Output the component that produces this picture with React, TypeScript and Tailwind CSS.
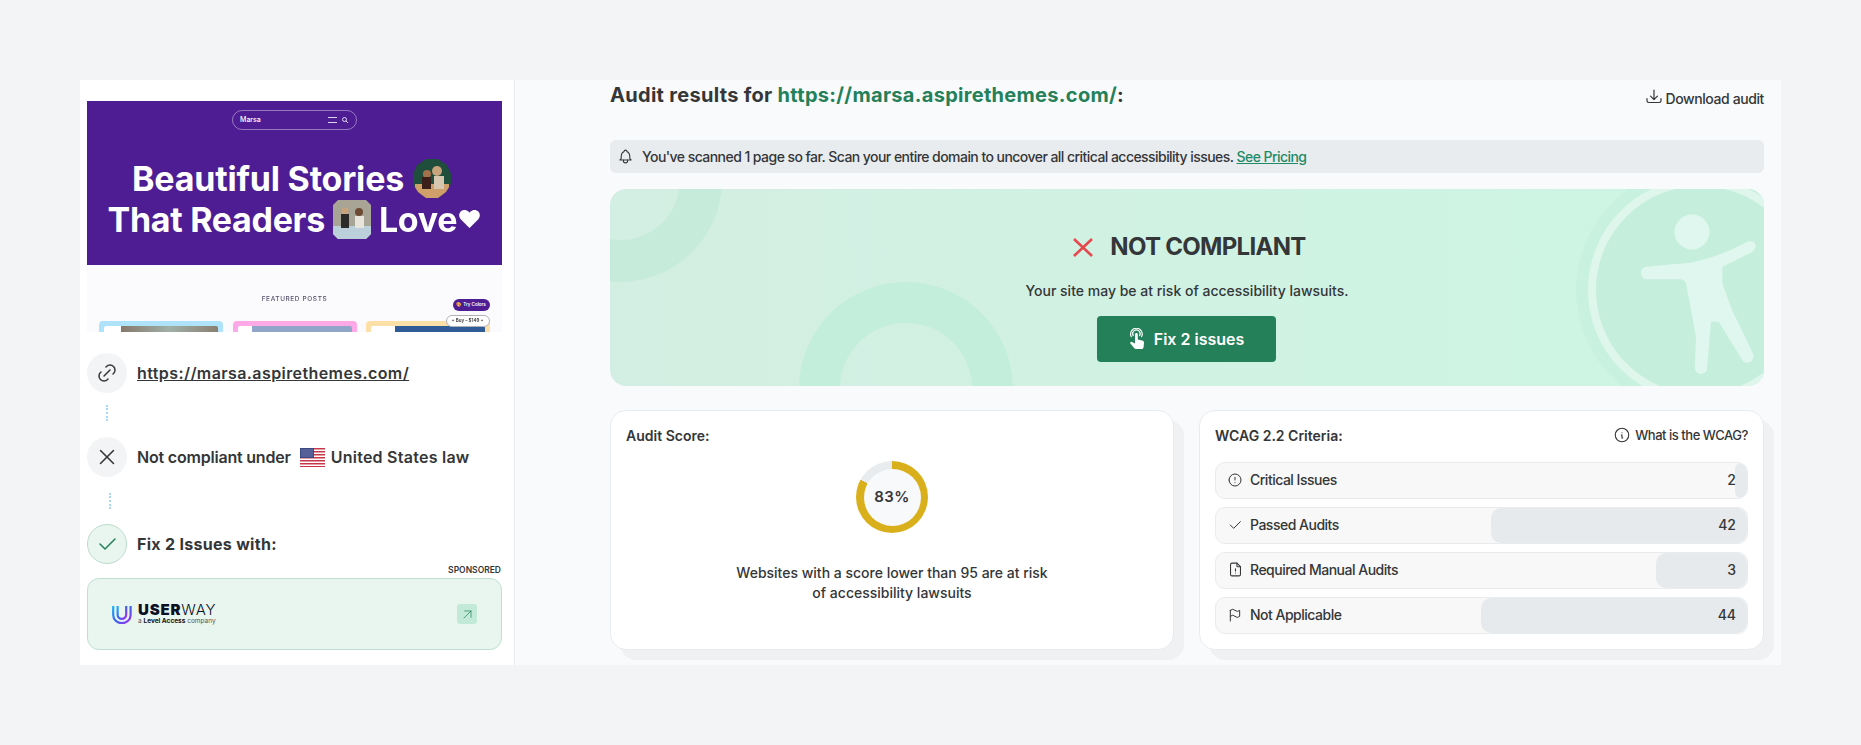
import React from "react";
import { TbLink, TbX, TbCheck, TbBell, TbInfoCircle, TbAlertCircle, TbFileAlert, TbFlag, TbArrowUpRight } from "react-icons/tb";

function HandIcon() {
  return (
    <svg width="18" height="22" viewBox="0 0 18 22" fill="none" className="shrink-0">
      <path d="M3.2 8.6a5.8 5.8 0 1 1 10.4 0" stroke="#fff" strokeWidth="1.2" strokeLinecap="round" />
      <path d="M5.2 7.6a3.7 3.7 0 1 1 6.4 0" stroke="#fff" strokeWidth="1.2" strokeLinecap="round" />
      <path d="M7 6.4a1.4 1.4 0 0 1 2.8 0v5.2l4.4 1a2.2 2.2 0 0 1 1.8 2.3l-.5 4.6a2 2 0 0 1-2 1.5H8a2.2 2.2 0 0 1-1.7-.8L2.4 15.6c-.8-1 .4-2.4 1.6-1.7L7 15.6z" fill="#fff" />
    </svg>
  );
}

function DownloadIcon() {
  return (
    <svg width="16" height="15" viewBox="0 0 16 15" fill="none" stroke="#343638" strokeWidth="1.2" strokeLinecap="round" strokeLinejoin="round" className="-mt-[6px] shrink-0">
      <path d="M8 1v9.4M4.6 7.2 8 10.6l3.4-3.4" />
      <path d="M1 9.6v2.2c0 1 .8 1.7 1.7 1.7h10.6c.9 0 1.7-.7 1.7-1.7V9.6" />
    </svg>
  );
}

function CrossIcon() {
  return (
    <svg width="20" height="19" viewBox="0 0 20 19" fill="none" stroke="#e5484d" strokeWidth="2.6" className="shrink-0">
      <path d="M1 1l18 17M19 1 1 18" />
    </svg>
  );
}

function FlagUS() {
  return (
    <svg width="25" height="19" viewBox="0 0 25 19" className="shrink-0">
      <rect width="25" height="19" fill="#fff" />
      {[0, 3, 6, 9, 12, 15, 18].map((y) => (
        <rect key={y} y={y} width="25" height="1.5" fill="#c8384a" />
      ))}
      <rect width="14" height="10" fill="#3c4a86" />
      <rect x="1" y="1" width="12" height="8" fill="#6670a3" opacity="0.6" />
    </svg>
  );
}

function Thumb({ bg, clip, points, children }: { bg: string; clip: string; points: string; children?: React.ReactNode }) {
  return (
    <svg width="38" height="39" viewBox="0 0 38 39" className="inline-block shrink-0">
      <defs>
        <clipPath id={clip}>
          <polygon points={points} />
        </clipPath>
      </defs>
      <g clipPath={`url(#${clip})`}>
        <rect width="38" height="39" fill={bg} />
        {children}
      </g>
    </svg>
  );
}

function Preview() {
  return (
    <div className="relative h-[231px] shrink-0 overflow-hidden bg-[#fbfbfe]">
      <div className="blur-[0.3px]">
        <div className="flex h-[164px] flex-col items-center bg-[#4e1d93] pt-[9px] text-white">
          <div className="flex h-[20px] w-[125px] items-center justify-between rounded-full border border-white/40 pl-[7px] pr-[8px]">
            <span className="text-[7px] font-medium">Marsa</span>
            <span className="flex items-center gap-[5px]">
              <span className="flex h-[6px] w-[9px] flex-col justify-between">
                <span className="h-px bg-white/80" />
                <span className="h-px bg-white/80" />
              </span>
              <svg width="6" height="6" viewBox="0 0 6 6" fill="none" stroke="#fff" strokeWidth="0.8">
                <circle cx="2.5" cy="2.5" r="2" />
                <path d="m4 4 2 2" />
              </svg>
            </span>
          </div>
          <div className="mt-[28px] flex h-[41px] items-center gap-[9px] pr-[6px] text-[34px] font-bold tracking-[-0.2px]">
            <span>Beautiful Stories</span>
            <Thumb bg="#1f4f3c" clip="thumb-a" points="13,0 25,0 34,6 38,15 38,25 33,33 25,39 13,39 5,33 0,25 0,15 4,6">
              <rect x="2" y="25" width="34" height="14" fill="#d0a06a" />
              <circle cx="24" cy="12" r="5" fill="#c9a37c" />
              <circle cx="14" cy="15" r="4" fill="#a5714c" />
              <rect x="9" y="18" width="9" height="12" fill="#3a1f1a" />
              <rect x="21" y="17" width="10" height="13" fill="#d8c7b0" />
            </Thumb>
          </div>
          <div className="flex h-[41px] items-center gap-[8px] text-[34px] font-bold tracking-[-0.3px]">
            <span>That Readers</span>
            <Thumb bg="#a9a596" clip="thumb-b" points="5,0 33,0 38,5 38,34 33,39 5,39 0,34 0,5">
              <rect y="26" width="38" height="13" fill="#bcd0dc" />
              <circle cx="12" cy="11" r="3.5" fill="#c9a37c" />
              <rect x="8" y="14" width="8" height="14" fill="#2d2a2a" />
              <circle cx="26" cy="12" r="4" fill="#6e4a34" />
              <rect x="22" y="16" width="9" height="12" fill="#e8e4dc" />
            </Thumb>
            <span className="flex items-center">
              Love<span className="text-[24px]">♥</span>
            </span>
          </div>
        </div>
        <p className="mt-[30px] text-center text-[6.5px] font-medium tracking-[0.6px] text-[#55516a]">FEATURED POSTS</p>
        <div className="mt-[16px] flex gap-[9.5px] pl-[12px]">
          <div className="flex h-[20px] w-[124px] rounded-[4px] bg-[#aee3fb] px-[5px] pt-[5px]">
            <div className="h-full w-[17px] rounded-tl-[2px] bg-white" />
            <div className="h-full flex-1 rounded-tr-[2px] bg-gradient-to-r from-[#86796b] via-[#9fb0a8] to-[#8a7f70]" />
          </div>
          <div className="flex h-[20px] w-[124px] rounded-[4px] bg-[#fda9e8] px-[5px] pt-[5px]">
            <div className="h-full w-[14px] rounded-tl-[2px] bg-white" />
            <div className="h-full flex-1 rounded-tr-[2px] bg-[#8fa6c8]" />
          </div>
          <div className="flex h-[20px] w-[124px] rounded-[4px] bg-[#fddfa8] px-[5px] pt-[5px]">
            <div className="h-full w-[24px] rounded-tl-[2px] bg-white" />
            <div className="h-full flex-1 rounded-tr-[2px] bg-[#2f5c96]" />
          </div>
        </div>
      </div>
      <div className="absolute right-[12.5px] top-[198px] flex h-[12px] w-[37px] items-center justify-center rounded-full bg-[#4e1d93] text-[4.5px] font-semibold text-white">
        🎨 Try Colors
      </div>
      <div className="absolute right-[12.5px] top-[214px] flex h-[12px] w-[44px] items-center justify-center gap-[3px] rounded-full border border-[#b0afb8] bg-white text-[4.5px] font-semibold text-[#333]">
        + Buy – $149 +
      </div>
    </div>
  );
}

function Circle({ children, ok }: { children: React.ReactNode; ok?: boolean }) {
  return (
    <span
      className={
        ok
          ? "flex h-10 w-10 shrink-0 items-center justify-center rounded-full border border-[#bcdccd] bg-[#e9f6ef] text-[#238059]"
          : "flex h-10 w-10 shrink-0 items-center justify-center rounded-full bg-[#f3f4f6] text-[#343638]"
      }
    >
      {children}
    </span>
  );
}

function Left() {
  return (
    <aside className="flex w-[435px] shrink-0 flex-col border-r border-[#e9ecef] bg-white pl-[7px] pr-[12px] pt-[21px] text-[#343638]">
      <Preview />
      <div className="mt-[21px] flex h-10 items-center gap-[10px]">
        <Circle>
          <TbLink size={24} strokeWidth={1.5} />
        </Circle>
        <a className="text-[16px] font-semibold tracking-[0.41px] underline">https://marsa.aspirethemes.com/</a>
      </div>
      <div className="flex h-[44px] items-center pb-[4px] pl-[19px]">
        <span className="h-4 border-l-2 border-dotted border-[#a5d8ff]" />
      </div>
      <div className="flex h-10 items-center gap-[10px]">
        <Circle>
          <TbX size={26} strokeWidth={1.4} />
        </Circle>
        <span className="flex items-center text-[16px] font-semibold">
          <span className="tracking-[-0.2px]">Not compliant under</span>
          <span className="ml-[9px] mr-[6px]">
            <FlagUS />
          </span>
          <span className="tracking-[0.25px]">United States law</span>
        </span>
      </div>
      <div className="flex h-[47px] items-center pl-[22px]">
        <span className="h-4 border-l-2 border-dotted border-[#a5d8ff]" />
      </div>
      <div className="flex h-10 items-center gap-[10px]">
        <Circle ok>
          <TbCheck size={24} strokeWidth={1.5} />
        </Circle>
        <span className="text-[16px] font-bold tracking-[0.3px]">Fix 2 Issues with:</span>
      </div>
      <p className="h-[14px] pr-[1px] text-right text-[8.5px] font-semibold leading-[12px]">SPONSORED</p>
      <div className="flex h-[72px] items-center justify-between rounded-[12px] border border-[#bfe0d1] bg-[#e9f6ef] pl-[24px] pr-[24px]">
        <div className="flex items-center gap-[6px]">
          <svg width="20" height="19" viewBox="0 0 20 19" fill="none">
            <defs>
              <linearGradient id="uw" x1="0" y1="0" x2="1" y2="1">
                <stop offset="0" stopColor="#1fb0f8" />
                <stop offset="0.5" stopColor="#3563f0" />
                <stop offset="1" stopColor="#a92ef0" />
              </linearGradient>
            </defs>
            <path d="M1.2 1v9a8.7 8.2 0 0 0 17.4 0V1" stroke="url(#uw)" strokeWidth="2.2" />
            <path d="M5.6 1v8.6a4.3 4.3 0 0 0 8.6 0V1" stroke="url(#uw)" strokeWidth="2.2" />
          </svg>
          <div className="flex flex-col text-[#0c1024]">
            <span className="text-[15px] font-black leading-[13px] tracking-[0.8px]">
              USER<span className="font-light">WAY</span>
            </span>
            <span className="mt-[1px] text-[6.5px] leading-[8px] text-[#555]">
              a <b className="text-[#0c1024]">Level Access</b> company
            </span>
          </div>
        </div>
        <span className="flex h-5 w-5 items-center justify-center rounded-[3px] bg-[#c3ead8] text-[#238059]">
          <TbArrowUpRight size={17} strokeWidth={1} />
        </span>
      </div>
    </aside>
  );
}

function HeroDecor() {
  return (
    <svg viewBox="610 189 1154 197" className="pointer-events-none absolute inset-0 h-full w-full" preserveAspectRatio="none" aria-hidden="true">
      <circle cx="620" cy="180" r="81" fill="none" stroke="#c6ebdb" strokeWidth="42" />
      <circle cx="906" cy="389" r="86.5" fill="none" stroke="#c4eedc" strokeWidth="41" />
      <circle cx="1700" cy="290" r="124" fill="#c9f1df" />
      <circle cx="1700" cy="290" r="108" fill="#c5eedc" stroke="#dff6ed" strokeWidth="8" />
      <circle cx="1692" cy="232" r="17.5" fill="#dff7ee" />
      <path
        d="M1645.8 266.7 1689.9 262.7Q1720 257 1747.3 241.7Q1755.7 240 1755.7 246.7Q1755 250 1751 252.7L1722.4 266.7V283.3L1732 310 1753.8 355Q1753 362 1748 362.7Q1745 362.7 1743.4 361.7L1718.6 321.7H1710.9L1707 370Q1705 374 1700.6 374Q1695 373 1694.8 368.3L1696 336.7 1686 283.3Q1684 279.3 1680.3 279.3H1645.8Q1640.9 278 1640.9 273Q1641 268 1645.8 266.7Z"
        fill="#dff7ee"
      />
    </svg>
  );
}

function Hero() {
  return (
    <section className="relative mt-[16px] flex h-[197px] flex-col items-center overflow-hidden rounded-[16px] bg-gradient-to-r from-[#d3eee2] to-[#cdf6e4] pt-[46px]">
      <HeroDecor />
      <div className="relative ml-[5px] flex h-6 items-center gap-[17px]">
        <CrossIcon />
        <h2 className="text-[24px] font-bold leading-6 tracking-[-0.7px] text-[#343638]">NOT COMPLIANT</h2>
      </div>
      <p className="relative mt-[22px] text-[14px] font-medium leading-5 text-[#343638]">Your site may be at risk of accessibility lawsuits.</p>
      <a className="relative mr-[2px] mt-[15px] flex h-[46px] w-[179px] items-center justify-center gap-[8px] rounded-[4px] bg-[#238059] text-[16px] font-semibold text-white">
        <HandIcon />
        Fix 2 issues
      </a>
    </section>
  );
}

function Row({ icon, label, value, bar }: { icon: React.ReactNode; label: string; value: number; bar: number }) {
  return (
    <div className="relative flex h-[37px] items-center overflow-hidden rounded-[10px] border border-[#e9ecef] bg-[#f8f8f8] pb-[2px] pl-[11px] pr-[11px] text-[14px] font-medium text-[#343638]">
      <span className="absolute inset-y-0 right-0 rounded-[10px] bg-[#e7eaec]" style={{ width: bar }} />
      <span className="relative flex w-[23px] shrink-0 items-center">{icon}</span>
      <span className="relative flex-1 tracking-[-0.5px]">{label}</span>
      <span className="relative">{value}</span>
    </div>
  );
}

function Main() {
  return (
    <main className="flex flex-1 flex-col bg-[#f9fafb] pl-[95px] pr-[17px] text-[#343638]">
      <header className="flex h-[60px] items-start justify-between">
        <h1 className="mt-[1px] text-[20px] font-bold leading-7 tracking-[0.3px]">
          Audit results for <span className="text-[#238059]">https://marsa.aspirethemes.com/</span>:
        </h1>
        <a className="mt-[9px] flex items-center gap-[3px] text-[14px] font-medium leading-5 tracking-[-0.4px]">
          <DownloadIcon />
          Download audit
        </a>
      </header>
      <div className="flex h-[33px] items-center gap-[8px] rounded-[6px] bg-[#e9ecef] pl-[7px] text-[14px] font-medium tracking-[-0.55px]">
        <TbBell size={17} strokeWidth={1.5} />
        <span>
          You've scanned 1 page so far. Scan your entire domain to uncover all critical accessibility issues.{" "}
          <a className="text-[#1f8a65] underline">See Pricing</a>
        </span>
      </div>
      <Hero />
      <div className="mt-[24px] grid grid-cols-[564px_565px] gap-[25px]">
        <section className="h-[240px] rounded-[16px] border border-[#e9ecef] bg-white px-[15px] pt-[15px] shadow-[10px_10px_0_#f0f1f3]">
          <h3 className="text-[14px] font-semibold leading-5">Audit Score:</h3>
          <div className="mt-[15px] flex justify-center">
            <div
              className="flex h-[72px] w-[72px] items-center justify-center rounded-full"
              style={{ background: "conic-gradient(#d9b01c 0 83%, #e9ecef 83% 100%)" }}
            >
              <div className="flex h-[57px] w-[57px] items-center justify-center rounded-full bg-[#f8f9fa] text-[15px] font-semibold tracking-[0.5px]">83%</div>
            </div>
          </div>
          <p className="mt-[30px] text-center text-[14px] font-medium leading-5">
            Websites with a score lower than 95 are at risk
            <br />
            of accessibility lawsuits
          </p>
        </section>
        <section className="h-[240px] rounded-[16px] border border-[#e9ecef] bg-white px-[15px] pt-[15px] shadow-[10px_10px_0_#f0f1f3]">
          <div className="flex items-center justify-between">
            <h3 className="text-[14px] font-semibold leading-5">WCAG 2.2 Criteria:</h3>
            <a className="-mt-[2px] flex items-center gap-[4px] text-[13px] font-medium leading-5 tracking-[-0.47px]">
              <TbInfoCircle size={18} strokeWidth={1.5} />
              What is the WCAG?
            </a>
          </div>
          <div className="mt-[16px] flex flex-col gap-[8px]">
            <Row icon={<TbAlertCircle size={16} strokeWidth={1.5} />} label="Critical Issues" value={2} bar={12} />
            <Row icon={<TbCheck size={16} strokeWidth={1.5} />} label="Passed Audits" value={42} bar={256} />
            <Row icon={<TbFileAlert size={17} strokeWidth={1.5} />} label="Required Manual Audits" value={3} bar={91} />
            <Row icon={<TbFlag size={16} strokeWidth={1.5} />} label="Not Applicable" value={44} bar={266} />
          </div>
        </section>
      </div>
    </main>
  );
}

export default function App() {
  return (
    <div className="h-[745px] overflow-hidden bg-[#f3f4f6] pl-[80px] pt-[80px] font-[Inter,sans-serif]">
      <div className="flex h-[585px] w-[1701px]">
        <Left />
        <Main />
      </div>
    </div>
  );
}
